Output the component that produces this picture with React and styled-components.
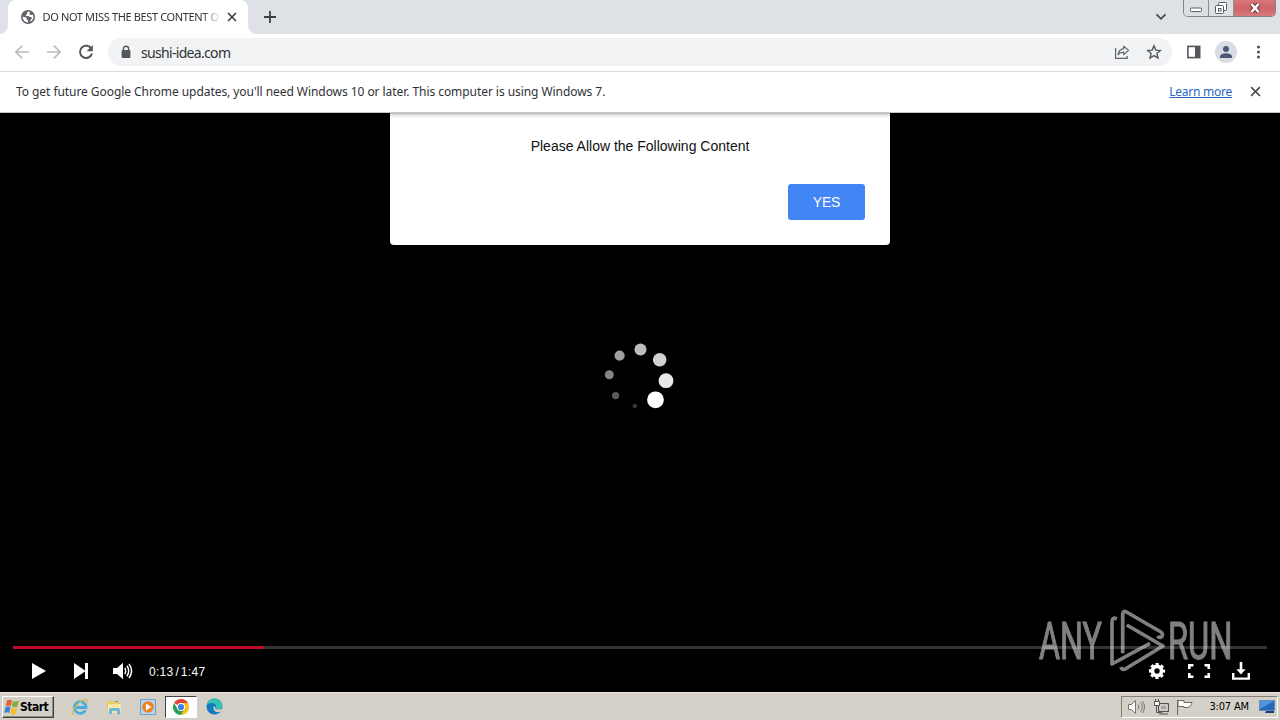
import React from 'react'
import styled, { createGlobalStyle } from 'styled-components'

const GlobalStyle = createGlobalStyle`
    * {
        box-sizing: border-box;
    }
    body {
        margin: 0;
        background: #000;
        overflow: hidden;
    }
    svg {
        display: block;
        flex: none;
    }
`
const Screen = styled.div`
    position: relative;
    width: 1280px;
    height: 720px;
    display: flex;
    flex-direction: column;
    overflow: hidden;
    font-family: 'Noto Sans', 'Open Sans', sans-serif;
    color: #303236;
`

/* browser chrome */
const TabStrip = styled.div`
    height: 34px;
    display: flex;
    align-items: flex-start;
    background: #dee1e6;
`
const TabFoot = styled.div`
    width: 8px;
    height: 8px;
    margin-top: 26px;
    background: ${({ $right }) => `radial-gradient(circle at ${$right ? '100%' : '0'} 0, #dee1e6 7.5px, #fff 8px)`};
`
const Tab = styled.div`
    width: 240px;
    height: 34px;
    padding: 0 11px 0 13px;
    display: flex;
    align-items: center;
    justify-content: space-between;
    background: #fff;
    border-radius: 8px 8px 0 0;
`
const TabTitle = styled.div`
    width: 176px;
    margin-left: -1px;
    overflow: hidden;
    white-space: nowrap;
    font-size: 11px;
    line-height: 16px;
    letter-spacing: -0.36px;
    mask-image: linear-gradient(90deg, #000 160px, transparent 178px);
`
const NewTab = styled.div`
    margin: 11px 0 0 8px;
`
const TabSearch = styled.div`
    margin: 13px 16px 0 auto;
`
const WindowButtons = styled.div`
    display: flex;
    width: 93px;
    height: 17px;
    margin-right: 4px;
    border: 1px solid #83868f;
    border-top: none;
    border-radius: 0 0 5px 5px;
    overflow: hidden;
`
const WindowButton = styled.div`
    width: ${({ $width }) => $width}px;
    display: flex;
    align-items: center;
    justify-content: center;
    border-right: ${({ $close }) => ($close ? 'none' : '1px solid #8b8e96')};
    background: ${({ $close }) => ($close ? 'linear-gradient(#d9777b, #cf6367 50%, #d77a7d)' : '#dcdfe4')};
`
const Toolbar = styled.div`
    height: 38px;
    padding: 0 13px 1px 14px;
    display: flex;
    align-items: center;
    background: #fff;
    border-bottom: 1px solid #dadce0;
`
const NavButtons = styled.div`
    display: flex;
    gap: 16px;
`
const AddressBar = styled.div`
    flex: 1;
    height: 28px;
    margin: 0 14px;
    padding: 0 10px 0 11px;
    display: flex;
    align-items: center;
    border-radius: 14px;
    background: #f1f3f4;
`
const Url = styled.div`
    flex: 1;
    margin-left: 8px;
    padding-top: 2px;
    font-size: 14px;
    line-height: 20px;
    letter-spacing: -0.68px;
`
const Group = styled.div`
    display: flex;
    align-items: center;
    gap: ${({ $gap }) => $gap}px;
`
const Avatar = styled.div`
    width: 22px;
    height: 22px;
    display: flex;
    align-items: center;
    justify-content: center;
    border-radius: 50%;
    background: #d9dde3;
`
const InfoBar = styled.div`
    height: 41px;
    padding: 0 19px 1px 16px;
    display: flex;
    align-items: center;
    background: #fff;
    font-size: 12px;
    border-bottom: 1px solid #c4c6c9;
`
const Message = styled.div`
    flex: 1;
    white-space: nowrap;
    letter-spacing: -0.06px;
`
const LearnMore = styled.a`
    margin-right: 18px;
    letter-spacing: -0.25px;
    color: #2468c0;
    text-decoration: underline;
`

/* page */
const Page = styled.div`
    height: 579px;
    display: flex;
    flex-direction: column;
    align-items: center;
    background: #000;
`
const Dialog = styled.div`
    width: 500px;
    height: 132px;
    padding: 24px 25px 25px;
    display: flex;
    flex-direction: column;
    align-items: center;
    justify-content: space-between;
    background: linear-gradient(#b8b8b8, #e4e4e4 2px, #fff 5px);
    border-radius: 0 0 4px 4px;
    font-family: 'Liberation Sans', Arial, sans-serif;
    font-size: 14px;
    line-height: 18px;
    color: #111;
`
const YesButton = styled.button`
    align-self: flex-end;
    width: 77px;
    height: 36px;
    padding: 0;
    border: none;
    border-radius: 3px;
    background: #4285f4;
    color: #fff;
    font: 14px 'Liberation Sans', Arial, sans-serif;
    letter-spacing: -0.2px;
`
const Spinner = styled.svg`
    margin-top: 85px;
`
const Player = styled.div`
    width: 1254px;
    margin-top: auto;
`
const Track = styled.div`
    height: 3px;
    background: #333;
`
const Played = styled.div`
    height: 3px;
    background: #c00a28;
`
const Controls = styled.div`
    height: 43px;
    padding: 1px 17px 0 19px;
    display: flex;
    align-items: center;
    color: #fff;
`
const Time = styled.div`
    margin: 1px auto 0 16px;
    font-family: 'Liberation Sans', Arial, sans-serif;
    font-size: 12px;
    letter-spacing: 0.3px;
    word-spacing: -1.8px;
`
const Watermark = styled.svg`
    position: absolute;
    left: 1036px;
    top: 606px;
`

/* taskbar */
const Taskbar = styled.div`
    height: 28px;
    padding: 2px;
    display: flex;
    align-items: center;
    background: #d4d0c8;
    border-top: 1px solid #ece9e3;
    font-family: 'DejaVu Sans Condensed', 'DejaVu Sans', sans-serif;
    font-size: 11px;
    color: #000;
`
const StartButton = styled.div`
    width: 52px;
    height: 22px;
    padding-left: 1px;
    display: flex;
    align-items: center;
    border: 1px solid;
    border-color: #fff #404040 #404040 #fff;
    box-shadow: inset -1px -1px 0 #8d8a84;
    font-size: 12px;
    font-weight: bold;
    letter-spacing: -0.5px;
`
const TaskIcon = styled.div`
    width: ${({ $active }) => ($active ? 32 : 34)}px;
    height: 22px;
    display: flex;
    align-items: center;
    justify-content: center;
    border: ${({ $active }) => ($active ? '1px solid' : 'none')};
    border-color: #404040 #fff #fff #404040;
    background: ${({ $active }) => ($active ? '#fff' : 'transparent')};
`
const QuickLaunch = styled.div`
    display: flex;
    margin-left: 9px;
`
const Tray = styled.div`
    width: 157px;
    height: 22px;
    margin-left: auto;
    padding: 0 2px 0 6px;
    display: flex;
    align-items: center;
    border: 1px solid;
    border-color: #848078 #fff #fff #848078;
`
const Clock = styled.div`
    margin: 0 10px 0 auto;
    letter-spacing: -0.15px;
`

const dots = [
    { x: 50.5, y: 19.5, r: 6, fill: '#bdbdbd' },
    { x: 69.7, y: 29.7, r: 6.8, fill: '#d2d2d2' },
    { x: 76, y: 50.7, r: 7.4, fill: '#e8e8e8' },
    { x: 65.5, y: 69.8, r: 8.4, fill: '#fff' },
    { x: 44.7, y: 76, r: 2.3, fill: '#363636' },
    { x: 25.6, y: 65.6, r: 3.6, fill: '#5a5a5a' },
    { x: 19.3, y: 44.8, r: 4.5, fill: '#858585' },
    { x: 29.6, y: 25.6, r: 5.1, fill: '#a0a0a0' },
]

const Globe = () => (
    <svg width="14" height="14" viewBox="0 0 14 14">
        <circle cx="7" cy="7" r="7" fill="#5f6368" />
        <path d="M7.6 1.5 6 2.4v1.5L4.7 5.1l.8 1.1 2.2-.3.9 1.2 2 .1.2 1.5-1.2.8-.4 2.1c3.1-1.3 3.9-4.3 2.7-6.9L10.2 5 8.4 4.2l.5-2.4zM1.6 6.8l3 .4 1.3 1.2-.2 1.4 1.4.7v1.9C3.9 12.3 1.7 10 1.6 6.8z" fill="#fff" />
    </svg>
)

const Cross = ({ size = 10, width = 1.7, color = '#3c4043' }) => (
    <svg width={size} height={size} viewBox="0 0 10 10">
        <path d="M1 1l8 8M9 1L1 9" stroke={color} strokeWidth={width} fill="none" />
    </svg>
)

const Arrow = ({ flip }) => (
    <svg width="16" height="16" viewBox="0 0 16 16">
        <path
            d="M15 8H2M8.2 1.6L1.8 8l6.4 6.4"
            transform={flip ? 'matrix(-1 0 0 1 16 0)' : undefined}
            stroke="#babcbe"
            strokeWidth="1.7"
            fill="none"
        />
    </svg>
)

const BrowserTop = () => (
    <>
        <TabStrip>
            <TabFoot />
            <Tab>
                <Globe />
                <TabTitle>DO NOT MISS THE BEST CONTENT ON</TabTitle>
                <Cross />
            </Tab>
            <TabFoot $right />
            <NewTab>
                <svg width="12" height="12" viewBox="0 0 12 12">
                    <path d="M6 0v12M0 6h12" stroke="#3c4043" strokeWidth="1.8" />
                </svg>
            </NewTab>
            <TabSearch>
                <svg width="12" height="8" viewBox="0 0 12 8">
                    <path d="M1.5 1.3L6 5.8l4.5-4.5" stroke="#45484c" strokeWidth="1.8" fill="none" />
                </svg>
            </TabSearch>
            <WindowButtons>
                <WindowButton $width={25}>
                    <svg width="12" height="12" viewBox="0 0 12 12">
                        <rect x=".5" y="6" width="11" height="3.6" rx="1" fill="#fff" stroke="#565a66" />
                    </svg>
                </WindowButton>
                <WindowButton $width={25}>
                    <svg width="14" height="14" viewBox="0 0 14 14" fill="#fff" stroke="#565a66">
                        <rect x="4.5" y="1.5" width="8" height="8" rx="1" />
                        <rect x="1.5" y="4.5" width="8" height="8" rx="1" />
                        <rect x="4.5" y="7.5" width="2.5" height="2.5" />
                    </svg>
                </WindowButton>
                <WindowButton $width={41} $close>
                    <svg width="14" height="12" viewBox="0 0 14 12">
                        <path d="M3.5 2l7 8M10.5 2l-7 8" stroke="#65383d" strokeWidth="4.4" />
                        <path d="M3.5 2l7 8M10.5 2l-7 8" stroke="#fff" strokeWidth="2.5" />
                    </svg>
                </WindowButton>
            </WindowButtons>
        </TabStrip>
        <Toolbar>
            <NavButtons>
                <Arrow />
                <Arrow flip />
                <svg width="16" height="16" viewBox="0 0 16 16">
                    <path d="M13.4 4.8A6.1 6.1 0 1 0 14 9.5" stroke="#54575b" strokeWidth="2" fill="none" />
                    <path d="M14.8 1v6.2H8.6z" fill="#54575b" />
                </svg>
            </NavButtons>
            <AddressBar>
                <svg width="14" height="14" viewBox="0 0 14 14">
                    <rect x="2.6" y="5" width="8.8" height="8" rx="1" fill="#54575b" />
                    <path d="M4.4 5.5V3.8a2.6 2.6 0 0 1 5.2 0v1.7" stroke="#54575b" strokeWidth="1.4" fill="none" />
                </svg>
                <Url>sushi-idea.com</Url>
                <Group $gap={16}>
                    <svg width="16" height="16" viewBox="0 0 16 16" fill="none" stroke="#5f6368" strokeWidth="1.2">
                        <path d="M1.6 4v10.4h11.6V12" />
                        <path d="M9.7 2.2L14.6 6.4l-4.9 4.2V8.2c-2.6 0-4.3.8-5.6 2.5.4-3.2 2.3-5.6 5.6-6.1z" strokeLinejoin="round" />
                    </svg>
                    <svg width="16" height="16" viewBox="0 0 16 16">
                        <path d="M8 1.9l1.8 4.2 4.6.4-3.5 3 1.1 4.5L8 11.6 4 14l1.1-4.5-3.5-3 4.6-.4z" fill="none" stroke="#54575b" strokeWidth="1.4" />
                    </svg>
                </Group>
            </AddressBar>
            <Group $gap={14}>
                <svg width="15" height="14" viewBox="0 0 15 14">
                    <rect x="1.9" y="1.4" width="11.8" height="11.2" fill="none" stroke="#54575b" strokeWidth="1.6" />
                    <path d="M9 1h5v12H9z" fill="#54575b" />
                </svg>
                <Avatar>
                    <svg width="14" height="14" viewBox="0 0 14 14" fill="#4a5876">
                        <circle cx="7" cy="4" r="3" />
                        <path d="M1 13v-1.5C1 9.2 4.7 8.3 7 8.3s6 .9 6 3.2V13z" />
                    </svg>
                </Avatar>
                <svg width="16" height="16" viewBox="0 0 16 16" fill="#54575b">
                    <circle cx="7.5" cy="3" r="1.6" />
                    <circle cx="7.5" cy="8" r="1.6" />
                    <circle cx="7.5" cy="13" r="1.6" />
                </svg>
            </Group>
        </Toolbar>
        <InfoBar>
            <Message>To get future Google Chrome updates, you'll need Windows 10 or later. This computer is using Windows 7.</Message>
            <LearnMore>Learn more</LearnMore>
            <Cross size={11} width={1.6} color="#505357" />
        </InfoBar>
    </>
)

const VideoPlayer = () => (
    <Player>
        <Track>
            <Played style={{ width: '20%' }} />
        </Track>
        <Controls>
            <svg width="42" height="18" viewBox="0 0 42 18" fill="#fff">
                <path d="M0 1l14 8-14 8z" />
            </svg>
            <svg width="39" height="18" viewBox="0 0 39 18" fill="#fff">
                <path d="M0 1l11 7.6V1h3v16h-3V9.4L0 17z" />
            </svg>
            <svg width="20" height="18" viewBox="0 0 20 18">
                <path d="M0 6h4l6-5.2v16.4L4 12H0z" fill="#fff" />
                <path d="M11.8 6q1.800 3 0 6M13.900 3.800q3.600 5.200 0 10.400M16 2q5.200 7 0 14" fill="none" stroke="#fff" strokeWidth="1.5" />
            </svg>
            <Time>0:13 / 1:47</Time>
            <Group $gap={22}>
                <svg width="18" height="18" viewBox="0 0 18 18">
                    <circle cx="9" cy="9" r="4.6" fill="none" stroke="#fff" strokeWidth="3.8" />
                    <circle cx="9" cy="9" r="6.9" fill="none" stroke="#fff" strokeWidth="2.4" strokeDasharray="3.2 2.22" strokeDashoffset="1.6" />
                </svg>
                <svg width="22" height="18" viewBox="0 0 22 18" fill="none" stroke="#fff" strokeWidth="2.6">
                    <path d="M1.3 7V3.3h4.2M16.5 3.3h4.2V7M20.7 11v3.7h-4.2M5.5 14.7H1.3V11" />
                </svg>
                <svg width="18" height="18" viewBox="0 0 18 18">
                    <path d="M9 0v9" stroke="#fff" strokeWidth="2.6" />
                    <path d="M4.4 7.2h9.2L9 12.6z" fill="#fff" />
                    <path d="M1.2 11v5.6h15.6V11" fill="none" stroke="#fff" strokeWidth="2.4" />
                </svg>
            </Group>
        </Controls>
    </Player>
)

const AnyRun = () => (
    <Watermark width="220" height="76" viewBox="0 0 220 76" opacity=".5">
        <g fill="#fff" stroke="#fff" strokeWidth="1.1" fontFamily="Roboto, sans-serif" fontSize="51.5">
            <text x="3" y="53.2" textLength="63" lengthAdjust="spacingAndGlyphs">ANY</text>
            <text x="132" y="53.2" textLength="64.5" lengthAdjust="spacingAndGlyphs">RUN</text>
        </g>
        <path
            d="M80.7 13Q76 10.500 76 16V58L114 37.300M86.700 47.300V8.500Q87 4 90.500 6L125 26Q128 29 125 31.300Q123 32 121.500 30M90.700 19L127 40L90 62.500Q86 65 85 61"
            fill="none"
            stroke="#fff"
            strokeWidth="3.7"
            strokeLinejoin="round"
        />
    </Watermark>
)

const StartMenuBar = () => (
    <Taskbar>
        <StartButton>
            <svg width="16" height="16" viewBox="0 0 16 16">
                <path d="M3 1.500q2.500-1.500 5 0L6.800 7.200q-2.400-1.400-5 0z" fill="#e8602c" />
                <path d="M9 2q2.800 1.300 6-.500l-1.700 6q-2.800 1.500-5.500 0z" fill="#7fb241" />
                <path d="M1.500 8.300q2.600-1.400 5 0L5.200 14q-2.400-1.400-5 0z" fill="#3c82cf" />
                <path d="M7.500 8.800q2.700 1.500 5.500 0l-1.500 5.900q-2.800 1.400-5.300 0z" fill="#f6bd28" />
            </svg>
            Start
        </StartButton>
        <QuickLaunch>
            <TaskIcon>
                <svg width="18" height="18" viewBox="0 0 18 18" fill="none">
                    <path d="M14.300 12.300A5.800 5.800 0 1 1 15 9.500H4" stroke="#46aee4" strokeWidth="2.800" />
                    <path d="M3.500 15.800C-1 17 2 10.500 7.500 5.500S18 .500 15.500 5" stroke="#dfb545" strokeWidth="1.300" />
                </svg>
            </TaskIcon>
            <TaskIcon>
                <svg width="18" height="18" viewBox="0 0 16 18">
                    <path d="M1 3h5l1 1h7v11H1z" fill="#e9c96a" />
                    <path d="M2 6h13v9H2z" fill="#f7e7a4" />
                    <path d="M3 16v-4q0-2 2-2h7q2 0 2 2v4h-3v-3H6v3z" fill="#68b7de" />
                    <path d="M9 3h3v1H9z" fill="#4daf69" />
                </svg>
            </TaskIcon>
            <TaskIcon>
                <svg width="16" height="16" viewBox="0 0 16 16">
                    <path d="M.5.500h15v15H.500z" fill="#b9d6ee" stroke="#6f9fca" />
                    <circle cx="8" cy="8" r="5.800" fill="#ee8220" />
                    <path d="M6 4.500L11.500 8 6 11.500z" fill="#fff" />
                </svg>
            </TaskIcon>
            <TaskIcon $active>
                <svg width="16" height="16" viewBox="0 0 16 16">
                    <path d="M8 8L1.070 4A8 8 0 0 1 14.930 4z" fill="#e04436" />
                    <path d="M8 8V4h6.930A8 8 0 0 1 8 16l3.500-6z" fill="#fbc116" />
                    <path d="M8 8l3.460 2L8 16A8 8 0 0 1 1.070 4l3.470 6z" fill="#2f9e4f" />
                    <circle cx="8" cy="8" r="4" fill="#fff" />
                    <circle cx="8" cy="8" r="3.100" fill="#3f7fe8" />
                </svg>
            </TaskIcon>
            <TaskIcon>
                <svg width="17" height="17" viewBox="0 0 17 17">
                    <circle cx="8.500" cy="8.500" r="8" fill="#1479bd" />
                    <path d="M.8 7C2 1 8-.500 12.500 1.500c4 2 5 7 2.500 9-2 1.200-5 .500-5-1 1-3-2-4.500-4.500-4.500S1.500 6 .8 7z" fill="#35c2b5" />
                    <path d="M9.500 8.500c-1.300 2 1 4 5.800 2.300l1.200 1.400-1.500 1.300c-5 2-8-1-7.500-5z" fill="#d4d0c8" />
                </svg>
            </TaskIcon>
        </QuickLaunch>
        <Tray>
            <Group $gap={8}>
                <svg width="17" height="16" viewBox="0 0 17 16" fill="none" stroke="#77736d">
                    <path d="M.5 5.500h3l4-4v13l-4-4h-3z" fill="#fff" />
                    <path d="M10 5.500q2 2.500 0 5M12.500 3.500q3.500 4.500 0 9M14.500 2q4 6 0 12" />
                </svg>
                <svg width="16" height="16" viewBox="0 0 16 16">
                    <path d="M5.500 4.500h10v8h-10z" fill="#aaa69f" stroke="#55524d" />
                    <path d="M7 6h7v5H7z" fill="none" stroke="#fff" strokeWidth=".8" />
                    <path d="M9 13v1.500M6 15h9M3.500 7v6.500H8" stroke="#55524d" fill="none" />
                    <path d="M1.500 2.500h5v4h-5zM2.500 0v2M5.500 0v2" fill="#fff" stroke="#55524d" />
                </svg>
                <svg width="17" height="16" viewBox="0 0 17 16" fill="#fff" stroke="#6d6963">
                    <path d="M.5 1v15" />
                    <path d="M1 1.500h6v2h8q-1 5-5 5H7v-1H1z" />
                </svg>
            </Group>
            <Clock>3:07 AM</Clock>
            <svg width="16" height="14" viewBox="0 0 16 14">
                <path d="M.5.500h15v10H.500z" fill="#2469bd" stroke="#638ab8" />
                <path d="M1 1h14L1 9z" fill="#5095dc" />
                <path d="M7 11h8v2H6z" fill="#203f70" />
            </svg>
        </Tray>
    </Taskbar>
)

const App = () => {
    return (
        <Screen>
            <GlobalStyle />
            <BrowserTop />
            <Page>
                <Dialog>
                    Please Allow the Following Content
                    <YesButton>YES</YesButton>
                </Dialog>
                <Spinner width="100" height="90" viewBox="0 0 100 90">
                    {dots.map((dot) => (
                        <circle key={dot.fill} cx={dot.x} cy={dot.y} r={dot.r} fill={dot.fill} />
                    ))}
                </Spinner>
                <VideoPlayer />
            </Page>
            <StartMenuBar />
            <AnyRun />
        </Screen>
    )
}

export default App
